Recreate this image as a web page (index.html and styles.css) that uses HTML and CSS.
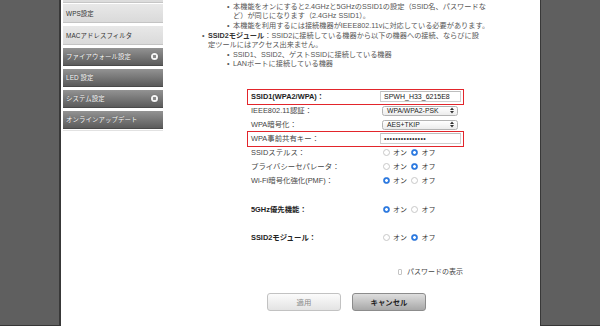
FILE: index.html
```html
<!DOCTYPE html>
<html lang="ja">
<head>
<meta charset="utf-8">
<title>無線LAN設定</title>
<link rel="stylesheet" href="styles.css">
</head>
<body>
<div class="page">
  <aside class="side side-left"></aside>
  <nav class="menu">
    <div class="m-stub"></div>
    <div class="m-item light">WPS設定</div>
    <div class="m-item light">MACアドレスフィルタ</div>
    <div class="m-item dark">ファイアウォール設定<span class="plus"></span></div>
    <div class="m-item dark">LED 設定</div>
    <div class="m-item dark">システム設定<span class="plus"></span></div>
    <div class="m-item dark">オンラインアップデート</div>
    <div class="m-line"></div>
  </nav>
  <main class="main">
    <div class="notes">
      <p class="cont">を利用することでスループットが向上します。</p>
      <ul class="sub">
        <li>本機能をオンにすると2.4GHzと5GHzのSSID1の設定（SSID名、パスワードな<br>ど）が同じになります（2.4GHz SSID1）。</li>
        <li>本機能を利用するには接続機器がIEEE802.11vに対応している必要があります。</li>
      </ul>
      <ul class="top">
        <li><strong>SSID2モジュール</strong>：SSID2に接続している機器から以下の機器への接続、ならびに設<br>定ツールにはアクセス出来ません。</li>
      </ul>
      <ul class="sub">
        <li>SSID1、SSID2、ゲストSSIDに接続している機器</li>
        <li>LANポートに接続している機器</li>
      </ul>
    </div>

    <div class="form">
      <div class="row hl b">
        <span class="lbl">SSID1(WPA2/WPA)：</span>
        <span class="inp">SPWH_H33_6215E8</span>
      </div>
      <div class="row">
        <span class="lbl">IEEE802.11認証：</span>
        <span class="sel">WPA/WPA2-PSK<svg class="arr" width="4" height="7" viewBox="0 0 4 7"><path d="M0 3 L2 0.5 L4 3 Z M0 4 L2 6.5 L4 4 Z" fill="#333"/></svg></span>
      </div>
      <div class="row">
        <span class="lbl">WPA暗号化：</span>
        <span class="sel">AES+TKIP<svg class="arr" width="4" height="7" viewBox="0 0 4 7"><path d="M0 3 L2 0.5 L4 3 Z M0 4 L2 6.5 L4 4 Z" fill="#333"/></svg></span>
      </div>
      <div class="row hl">
        <span class="lbl">WPA事前共有キー：</span>
        <span class="inp dots">•••••••••••••••</span>
      </div>
      <div class="row">
        <span class="lbl">SSIDステルス：</span>
        <span class="opt"><span class="r"></span><span class="t">オン</span><span class="r on"></span><span class="t">オフ</span></span>
      </div>
      <div class="row">
        <span class="lbl">プライバシーセパレータ：</span>
        <span class="opt"><span class="r"></span><span class="t">オン</span><span class="r on"></span><span class="t">オフ</span></span>
      </div>
      <div class="row">
        <span class="lbl">Wi-Fi暗号化強化(PMF)：</span>
        <span class="opt"><span class="r on"></span><span class="t">オン</span><span class="r"></span><span class="t">オフ</span></span>
      </div>
      <div class="row b gap15">
        <span class="lbl">5GHz優先機能：</span>
        <span class="opt"><span class="r on"></span><span class="t">オン</span><span class="r"></span><span class="t">オフ</span></span>
      </div>
      <div class="row b gap14">
        <span class="lbl">SSID2モジュール：</span>
        <span class="opt"><span class="r"></span><span class="t">オン</span><span class="r on"></span><span class="t">オフ</span></span>
      </div>
      <div class="row chk-row">
        <span class="chk"></span><span class="chk-t">パスワードの表示</span>
      </div>
      <div class="btns">
        <button class="btn apply">適用</button>
        <button class="btn cancel">キャンセル</button>
      </div>
    </div>
  </main>
  <aside class="side side-right"></aside>
</div>
</body>
</html>
```

FILE: styles.css
```css
* {
  box-sizing: border-box;
  margin: 0;
  padding: 0;
}

html, body {
  width: 600px;
  height: 327px;
  overflow: hidden;
  background: #fff;
}

body {
  font-family: "Liberation Sans", "Noto Sans CJK JP", sans-serif;
}

.page {
  display: flex;
  align-items: flex-start;
  height: 327px;
}

.side {
  flex: none;
  height: 326px;
  background: #5f5f5f;
  border-bottom: 1.5px solid #363636;
}

.side-left {
  width: 61px;
  border-right: 2px solid #383838;
}

.side-right {
  width: 60px;
  border-left: 1.5px solid #383838;
}

/* menu */
.menu {
  flex: none;
  width: 100px;
  margin-left: 2px;
  display: flex;
  flex-direction: column;
  gap: 3px;
}

.m-stub {
  height: 3px;
  background: #dcdcdc;
  border-bottom: 1px solid #c6c6c6;
  margin-bottom: -2px;
}

.m-item {
  display: flex;
  align-items: center;
  justify-content: space-between;
  padding: 0 5px 0 3px;
  font-size: 6.4px;
  letter-spacing: 0.1px;
}

.light {
  height: 19px;
  background: linear-gradient(#e8e8e8, #dadada);
  color: #333;
  border-bottom: 1px solid #c4c4c4;
}

.dark {
  height: 18px;
  background: linear-gradient(#939393, #5b5b5b);
  color: #fff;
  border-bottom: 1px solid #4a4a4a;
  text-shadow: 0 0 1px rgba(0,0,0,0.4);
}

.plus {
  width: 7px;
  height: 7px;
  border-radius: 50%;
  background: radial-gradient(circle, #8a8a8a 0 1.4px, #f4f4f4 1.8px);
  box-shadow: 0 0 1px rgba(0,0,0,0.4);
}

.m-line {
  height: 1px;
  background: #e2e2e2;
  margin-top: -2px;
}

/* main */
.main {
  flex: none;
  width: 377px;
  font-size: 7.2px;
  line-height: 9.55px;
  color: #555;
}

.notes {
  margin-top: -7.7px;
  white-space: nowrap;
}

.cont {
  padding-left: 58px;
}

.notes ul {
  list-style: none;
}

.notes li::before {
  content: "•";
  display: inline-block;
  width: 6px;
  margin-left: -6px;
  color: #555;
}

.sub li {
  padding-left: 70px;
}

.top li {
  padding-left: 45px;
}

.top strong {
  color: #333;
}

/* form */
.form {
  margin-top: 21.3px;
  margin-left: 85px;
  width: 215px;
}

.row {
  display: flex;
  align-items: center;
  height: 14px;
  font-size: 7.4px;
  color: #444;
}

.hl {
  outline: 1.5px solid #e2252b;
}

.b {
  font-weight: bold;
  color: #222;
}

.lbl {
  flex: none;
  width: 132px;
  padding-left: 3px;
  white-space: nowrap;
}

.inp {
  display: flex;
  align-items: center;
  width: 81px;
  height: 11px;
  border: 1px solid #cfcfcf;
  border-top-color: #bdbdbd;
  padding-left: 3px;
  font-size: 7px;
  font-weight: normal;
  color: #222;
  background: #fff;
}

.dots {
  font-size: 7px;
  letter-spacing: 0.35px;
  color: #333;
}

.sel {
  display: flex;
  align-items: center;
  justify-content: space-between;
  width: 76px;
  height: 10.5px;
  margin-left: 2px;
  padding: 0 3px 0 4px;
  border: 1px solid #b3b3b3;
  border-radius: 2.5px;
  background: linear-gradient(#ffffff, #ececec);
  font-size: 6.8px;
  color: #222;
}

.opt {
  display: flex;
  align-items: center;
  margin-left: 2.5px;
  font-weight: normal;
}

.r {
  width: 7px;
  height: 7px;
  border-radius: 50%;
  border: 1px solid #c8c8c8;
  background: #fff;
}

.r.on {
  border-color: #2a72d6;
  background: radial-gradient(circle, #fff 0 1.2px, #2c7fe9 1.6px);
}

.t {
  margin: 0 4px 0 3.5px;
  font-size: 7px;
  color: #333;
}

.gap15 { margin-top: 15px; }
.gap14 { margin-top: 14px; }

.chk-row {
  margin-top: 20px;
  padding-left: 150px;
}

.chk {
  width: 6px;
  height: 6px;
  border: 1px solid #c4c4c4;
  border-radius: 1px;
  background: #fff;
}

.chk-t {
  margin-left: 5px;
  font-size: 7px;
  color: #444;
  white-space: nowrap;
}

.btns {
  display: flex;
  gap: 11px;
  margin-top: 14px;
  padding-left: 19px;
}

.btn {
  width: 74px;
  height: 18px;
  border-radius: 3px;
  font-family: inherit;
  font-size: 7.4px;
  display: flex;
  align-items: center;
  justify-content: center;
}

.apply {
  border: 1px solid #c2c2c2;
  background: linear-gradient(#fbfbfb, #e3e3e3);
  color: #8a8a8a;
}

.cancel {
  border: 1px solid #8c8c8c;
  background: linear-gradient(#dedede, #a8a8a8);
  color: #222;
  font-weight: bold;
}
```
